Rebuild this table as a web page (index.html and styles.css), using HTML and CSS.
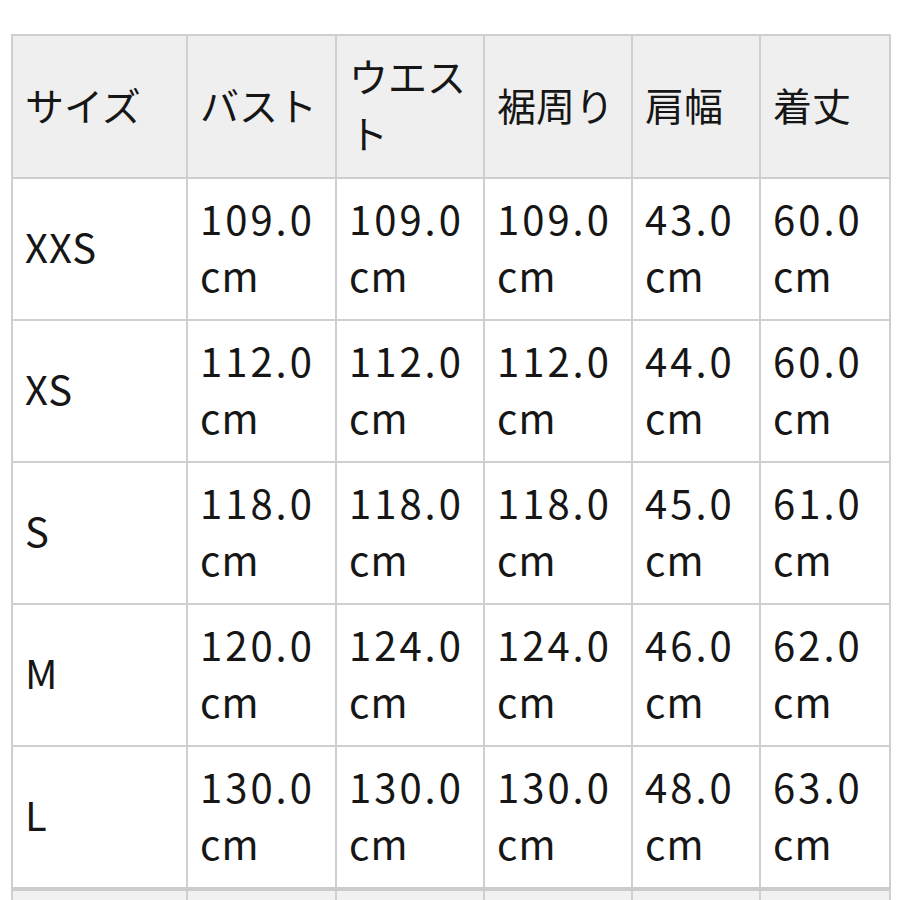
FILE: index.html
```html
<!DOCTYPE html>
<html lang="ja">
<head>
<meta charset="utf-8">
<link rel="stylesheet" href="styles.css">
</head>
<body>
<div class="page">
<table class="size-table">
  <colgroup>
    <col class="c1"><col class="c2"><col class="c3"><col class="c4"><col class="c5"><col class="c6">
  </colgroup>
  <thead>
    <tr><th>サイズ</th><th>バスト</th><th>ウエスト</th><th>裾周り</th><th>肩幅</th><th>着丈</th></tr>
  </thead>
  <tbody>
    <tr><td>XXS</td><td><span class="num">109.0</span> cm</td><td><span class="num">109.0</span> cm</td><td><span class="num">109.0</span> cm</td><td><span class="num">43.0</span> cm</td><td><span class="num">60.0</span> cm</td></tr>
    <tr><td>XS</td><td><span class="num">112.0</span> cm</td><td><span class="num">112.0</span> cm</td><td><span class="num">112.0</span> cm</td><td><span class="num">44.0</span> cm</td><td><span class="num">60.0</span> cm</td></tr>
    <tr><td>S</td><td><span class="num">118.0</span> cm</td><td><span class="num">118.0</span> cm</td><td><span class="num">118.0</span> cm</td><td><span class="num">45.0</span> cm</td><td><span class="num">61.0</span> cm</td></tr>
    <tr><td>M</td><td><span class="num">120.0</span> cm</td><td><span class="num">124.0</span> cm</td><td><span class="num">124.0</span> cm</td><td><span class="num">46.0</span> cm</td><td><span class="num">62.0</span> cm</td></tr>
    <tr><td>L</td><td><span class="num">130.0</span> cm</td><td><span class="num">130.0</span> cm</td><td><span class="num">130.0</span> cm</td><td><span class="num">48.0</span> cm</td><td><span class="num">63.0</span> cm</td></tr>
    <tr class="more"><td></td><td></td><td></td><td></td><td></td><td></td></tr>
  </tbody>
</table>
</div>
</body>
</html>
```
FILE: styles.css
```css
html, body {
  margin: 0;
  padding: 0;
  background: #ffffff;
}
.page {
  padding: 34px 0 0 11px;
  height: 900px;
  overflow: hidden;
  box-sizing: border-box;
}
.size-table {
  border-collapse: collapse;
  table-layout: fixed;
  width: 878px;
  font-family: "Noto Sans CJK JP", "Noto Sans", sans-serif;
  color: #161616;
}
.c1 { width: 175px; }
.c2 { width: 149px; }
.c3 { width: 148px; }
.c4 { width: 148px; }
.c5 { width: 128px; }
.c6 { width: 130px; }
.size-table th,
.size-table td {
  border: 2px solid #cfcfcf;
  padding: 10px 12px 15px 12px;
  text-align: left;
  vertical-align: middle;
  font-weight: 400;
  word-break: break-all;
}
.size-table th {
  background: #efefef;
  height: 116px;
  font-size: 39px;
  line-height: 57px;
}
.size-table td {
  height: 115px;
  background: #ffffff;
  font-size: 40px;
  line-height: 57px;
  letter-spacing: 1px;
}
.num {
  letter-spacing: 3px;
}
.size-table tr.more td {
  border-top: 4px solid #cccccc;
  background: #f1f1f1;
  height: 60px;
}
```
